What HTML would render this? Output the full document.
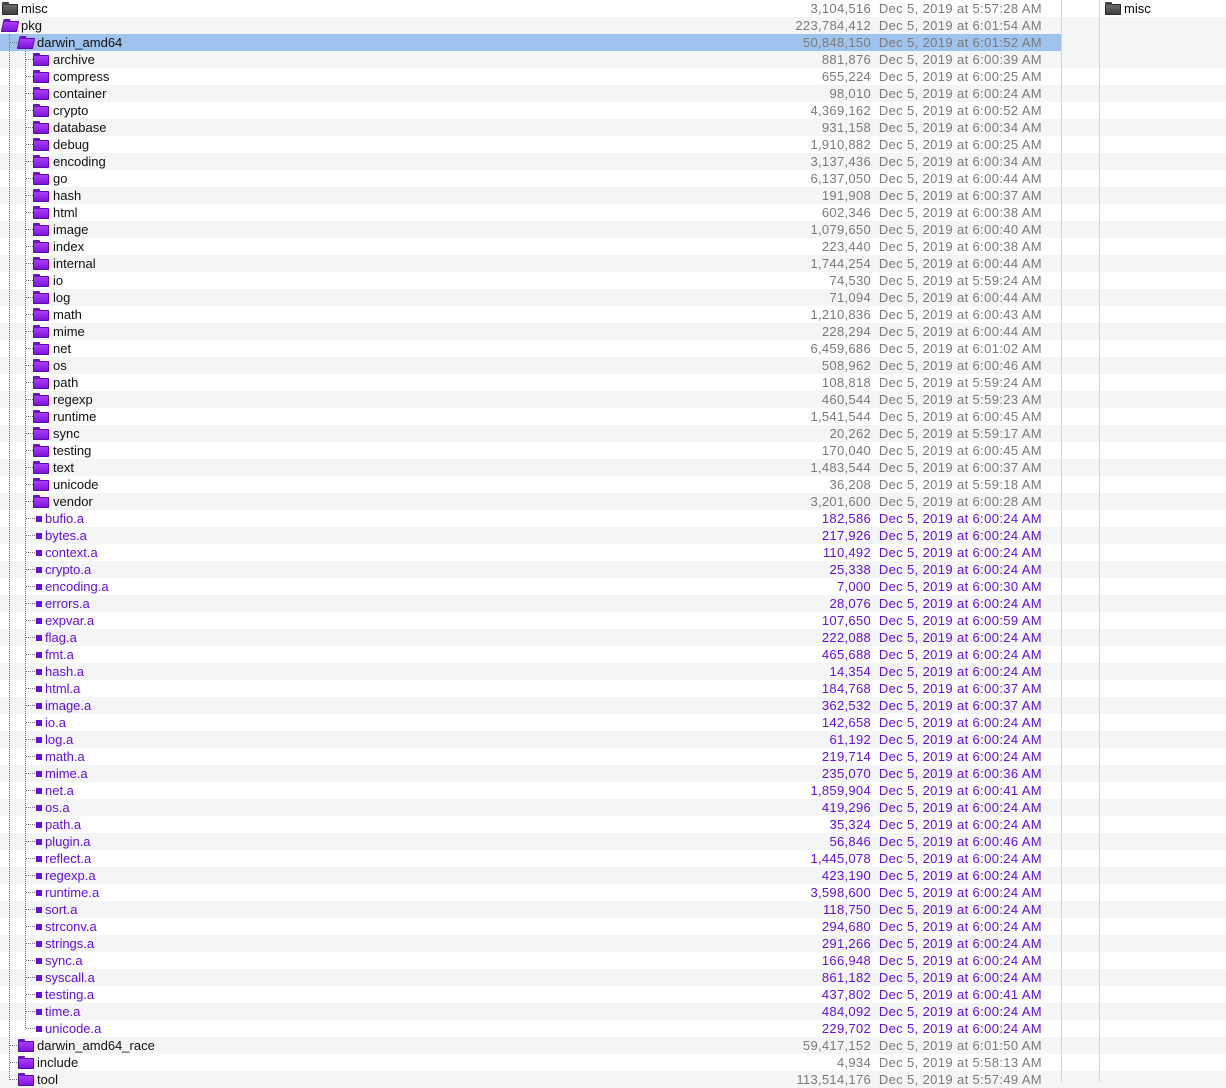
<!DOCTYPE html>
<html><head><meta charset="utf-8"><style>
body{margin:0;width:1226px;height:1082px;overflow:hidden;background:#fff;font-family:"Liberation Sans",Helvetica,sans-serif;font-size:13px;position:relative}
.r{position:relative;height:17px;line-height:17px;color:#111;white-space:nowrap}
.r:nth-child(even){background:#f4f5f5}
.sel{background:linear-gradient(to right,#9fc3ec 0,#9fc3ec 1061px,#f4f5f5 1061px)!important}
.n{position:absolute;top:0}
.s{position:absolute;right:355px;top:0;color:#7a7a7a;letter-spacing:0.3px}
.t{position:absolute;right:184px;top:0;color:#7a7a7a;letter-spacing:0.37px}
.p .n,.p .s,.p .t{color:#6610dc}
.f{position:absolute;top:4px;width:16px;height:11px;background:linear-gradient(#b040ff,#7a10d8);border-radius:1px;box-shadow:inset 0 0 0 1px #5a0aa8}
.f:before{content:"";position:absolute;left:0;top:-2px;width:7px;height:3px;background:#6a14c8;border-radius:1px 1px 0 0}
.g{background:linear-gradient(#707070,#3a3a3a);box-shadow:inset 0 0 0 1px #2a2a2a}.g:before{background:#444}
.o{transform:skewX(-12deg)}
.q{position:absolute;top:6px;width:6px;height:6px;background:#6610dc}
.h{position:absolute;top:8px;height:0;border-top:1px dotted #777}
.v{position:absolute;width:0;border-left:1px dotted #777}
.ln{position:absolute;top:0;width:1px;height:1082px;background:#d6d6d6}
#rows .r::after{content:"";position:absolute;top:8px;height:0;border-top:1px dotted #777}
#rows .r:nth-child(n+4):nth-child(-n+30)::after{left:26px;width:7px}
#rows .r:nth-child(n+31):nth-child(-n+61)::after{left:26px;width:9px}
#rows .r:nth-child(3)::after,#rows .r:nth-child(n+62)::after{left:10px;width:7px}
</style></head><body>
<div id="rows">
<div class="r"><i class="f g" style="left:2px"></i><span class="n" style="left:21px">misc</span><span class="s">3,104,516</span><span class="t">Dec 5, 2019 at 5:57:28 AM</span></div>
<div class="r"><i class="f o" style="left:2px"></i><span class="n" style="left:21px">pkg</span><span class="s">223,784,412</span><span class="t">Dec 5, 2019 at 6:01:54 AM</span></div>
<div class="r sel"><i class="f o" style="left:18px"></i><span class="n" style="left:37px">darwin_amd64</span><span class="s">50,848,150</span><span class="t">Dec 5, 2019 at 6:01:52 AM</span></div>
<div class="r"><i class="f" style="left:33px"></i><span class="n" style="left:53px">archive</span><span class="s">881,876</span><span class="t">Dec 5, 2019 at 6:00:39 AM</span></div>
<div class="r"><i class="f" style="left:33px"></i><span class="n" style="left:53px">compress</span><span class="s">655,224</span><span class="t">Dec 5, 2019 at 6:00:25 AM</span></div>
<div class="r"><i class="f" style="left:33px"></i><span class="n" style="left:53px">container</span><span class="s">98,010</span><span class="t">Dec 5, 2019 at 6:00:24 AM</span></div>
<div class="r"><i class="f" style="left:33px"></i><span class="n" style="left:53px">crypto</span><span class="s">4,369,162</span><span class="t">Dec 5, 2019 at 6:00:52 AM</span></div>
<div class="r"><i class="f" style="left:33px"></i><span class="n" style="left:53px">database</span><span class="s">931,158</span><span class="t">Dec 5, 2019 at 6:00:34 AM</span></div>
<div class="r"><i class="f" style="left:33px"></i><span class="n" style="left:53px">debug</span><span class="s">1,910,882</span><span class="t">Dec 5, 2019 at 6:00:25 AM</span></div>
<div class="r"><i class="f" style="left:33px"></i><span class="n" style="left:53px">encoding</span><span class="s">3,137,436</span><span class="t">Dec 5, 2019 at 6:00:34 AM</span></div>
<div class="r"><i class="f" style="left:33px"></i><span class="n" style="left:53px">go</span><span class="s">6,137,050</span><span class="t">Dec 5, 2019 at 6:00:44 AM</span></div>
<div class="r"><i class="f" style="left:33px"></i><span class="n" style="left:53px">hash</span><span class="s">191,908</span><span class="t">Dec 5, 2019 at 6:00:37 AM</span></div>
<div class="r"><i class="f" style="left:33px"></i><span class="n" style="left:53px">html</span><span class="s">602,346</span><span class="t">Dec 5, 2019 at 6:00:38 AM</span></div>
<div class="r"><i class="f" style="left:33px"></i><span class="n" style="left:53px">image</span><span class="s">1,079,650</span><span class="t">Dec 5, 2019 at 6:00:40 AM</span></div>
<div class="r"><i class="f" style="left:33px"></i><span class="n" style="left:53px">index</span><span class="s">223,440</span><span class="t">Dec 5, 2019 at 6:00:38 AM</span></div>
<div class="r"><i class="f" style="left:33px"></i><span class="n" style="left:53px">internal</span><span class="s">1,744,254</span><span class="t">Dec 5, 2019 at 6:00:44 AM</span></div>
<div class="r"><i class="f" style="left:33px"></i><span class="n" style="left:53px">io</span><span class="s">74,530</span><span class="t">Dec 5, 2019 at 5:59:24 AM</span></div>
<div class="r"><i class="f" style="left:33px"></i><span class="n" style="left:53px">log</span><span class="s">71,094</span><span class="t">Dec 5, 2019 at 6:00:44 AM</span></div>
<div class="r"><i class="f" style="left:33px"></i><span class="n" style="left:53px">math</span><span class="s">1,210,836</span><span class="t">Dec 5, 2019 at 6:00:43 AM</span></div>
<div class="r"><i class="f" style="left:33px"></i><span class="n" style="left:53px">mime</span><span class="s">228,294</span><span class="t">Dec 5, 2019 at 6:00:44 AM</span></div>
<div class="r"><i class="f" style="left:33px"></i><span class="n" style="left:53px">net</span><span class="s">6,459,686</span><span class="t">Dec 5, 2019 at 6:01:02 AM</span></div>
<div class="r"><i class="f" style="left:33px"></i><span class="n" style="left:53px">os</span><span class="s">508,962</span><span class="t">Dec 5, 2019 at 6:00:46 AM</span></div>
<div class="r"><i class="f" style="left:33px"></i><span class="n" style="left:53px">path</span><span class="s">108,818</span><span class="t">Dec 5, 2019 at 5:59:24 AM</span></div>
<div class="r"><i class="f" style="left:33px"></i><span class="n" style="left:53px">regexp</span><span class="s">460,544</span><span class="t">Dec 5, 2019 at 5:59:23 AM</span></div>
<div class="r"><i class="f" style="left:33px"></i><span class="n" style="left:53px">runtime</span><span class="s">1,541,544</span><span class="t">Dec 5, 2019 at 6:00:45 AM</span></div>
<div class="r"><i class="f" style="left:33px"></i><span class="n" style="left:53px">sync</span><span class="s">20,262</span><span class="t">Dec 5, 2019 at 5:59:17 AM</span></div>
<div class="r"><i class="f" style="left:33px"></i><span class="n" style="left:53px">testing</span><span class="s">170,040</span><span class="t">Dec 5, 2019 at 6:00:45 AM</span></div>
<div class="r"><i class="f" style="left:33px"></i><span class="n" style="left:53px">text</span><span class="s">1,483,544</span><span class="t">Dec 5, 2019 at 6:00:37 AM</span></div>
<div class="r"><i class="f" style="left:33px"></i><span class="n" style="left:53px">unicode</span><span class="s">36,208</span><span class="t">Dec 5, 2019 at 5:59:18 AM</span></div>
<div class="r"><i class="f" style="left:33px"></i><span class="n" style="left:53px">vendor</span><span class="s">3,201,600</span><span class="t">Dec 5, 2019 at 6:00:28 AM</span></div>
<div class="r p"><i class="q" style="left:36px"></i><span class="n" style="left:45px">bufio.a</span><span class="s">182,586</span><span class="t">Dec 5, 2019 at 6:00:24 AM</span></div>
<div class="r p"><i class="q" style="left:36px"></i><span class="n" style="left:45px">bytes.a</span><span class="s">217,926</span><span class="t">Dec 5, 2019 at 6:00:24 AM</span></div>
<div class="r p"><i class="q" style="left:36px"></i><span class="n" style="left:45px">context.a</span><span class="s">110,492</span><span class="t">Dec 5, 2019 at 6:00:24 AM</span></div>
<div class="r p"><i class="q" style="left:36px"></i><span class="n" style="left:45px">crypto.a</span><span class="s">25,338</span><span class="t">Dec 5, 2019 at 6:00:24 AM</span></div>
<div class="r p"><i class="q" style="left:36px"></i><span class="n" style="left:45px">encoding.a</span><span class="s">7,000</span><span class="t">Dec 5, 2019 at 6:00:30 AM</span></div>
<div class="r p"><i class="q" style="left:36px"></i><span class="n" style="left:45px">errors.a</span><span class="s">28,076</span><span class="t">Dec 5, 2019 at 6:00:24 AM</span></div>
<div class="r p"><i class="q" style="left:36px"></i><span class="n" style="left:45px">expvar.a</span><span class="s">107,650</span><span class="t">Dec 5, 2019 at 6:00:59 AM</span></div>
<div class="r p"><i class="q" style="left:36px"></i><span class="n" style="left:45px">flag.a</span><span class="s">222,088</span><span class="t">Dec 5, 2019 at 6:00:24 AM</span></div>
<div class="r p"><i class="q" style="left:36px"></i><span class="n" style="left:45px">fmt.a</span><span class="s">465,688</span><span class="t">Dec 5, 2019 at 6:00:24 AM</span></div>
<div class="r p"><i class="q" style="left:36px"></i><span class="n" style="left:45px">hash.a</span><span class="s">14,354</span><span class="t">Dec 5, 2019 at 6:00:24 AM</span></div>
<div class="r p"><i class="q" style="left:36px"></i><span class="n" style="left:45px">html.a</span><span class="s">184,768</span><span class="t">Dec 5, 2019 at 6:00:37 AM</span></div>
<div class="r p"><i class="q" style="left:36px"></i><span class="n" style="left:45px">image.a</span><span class="s">362,532</span><span class="t">Dec 5, 2019 at 6:00:37 AM</span></div>
<div class="r p"><i class="q" style="left:36px"></i><span class="n" style="left:45px">io.a</span><span class="s">142,658</span><span class="t">Dec 5, 2019 at 6:00:24 AM</span></div>
<div class="r p"><i class="q" style="left:36px"></i><span class="n" style="left:45px">log.a</span><span class="s">61,192</span><span class="t">Dec 5, 2019 at 6:00:24 AM</span></div>
<div class="r p"><i class="q" style="left:36px"></i><span class="n" style="left:45px">math.a</span><span class="s">219,714</span><span class="t">Dec 5, 2019 at 6:00:24 AM</span></div>
<div class="r p"><i class="q" style="left:36px"></i><span class="n" style="left:45px">mime.a</span><span class="s">235,070</span><span class="t">Dec 5, 2019 at 6:00:36 AM</span></div>
<div class="r p"><i class="q" style="left:36px"></i><span class="n" style="left:45px">net.a</span><span class="s">1,859,904</span><span class="t">Dec 5, 2019 at 6:00:41 AM</span></div>
<div class="r p"><i class="q" style="left:36px"></i><span class="n" style="left:45px">os.a</span><span class="s">419,296</span><span class="t">Dec 5, 2019 at 6:00:24 AM</span></div>
<div class="r p"><i class="q" style="left:36px"></i><span class="n" style="left:45px">path.a</span><span class="s">35,324</span><span class="t">Dec 5, 2019 at 6:00:24 AM</span></div>
<div class="r p"><i class="q" style="left:36px"></i><span class="n" style="left:45px">plugin.a</span><span class="s">56,846</span><span class="t">Dec 5, 2019 at 6:00:46 AM</span></div>
<div class="r p"><i class="q" style="left:36px"></i><span class="n" style="left:45px">reflect.a</span><span class="s">1,445,078</span><span class="t">Dec 5, 2019 at 6:00:24 AM</span></div>
<div class="r p"><i class="q" style="left:36px"></i><span class="n" style="left:45px">regexp.a</span><span class="s">423,190</span><span class="t">Dec 5, 2019 at 6:00:24 AM</span></div>
<div class="r p"><i class="q" style="left:36px"></i><span class="n" style="left:45px">runtime.a</span><span class="s">3,598,600</span><span class="t">Dec 5, 2019 at 6:00:24 AM</span></div>
<div class="r p"><i class="q" style="left:36px"></i><span class="n" style="left:45px">sort.a</span><span class="s">118,750</span><span class="t">Dec 5, 2019 at 6:00:24 AM</span></div>
<div class="r p"><i class="q" style="left:36px"></i><span class="n" style="left:45px">strconv.a</span><span class="s">294,680</span><span class="t">Dec 5, 2019 at 6:00:24 AM</span></div>
<div class="r p"><i class="q" style="left:36px"></i><span class="n" style="left:45px">strings.a</span><span class="s">291,266</span><span class="t">Dec 5, 2019 at 6:00:24 AM</span></div>
<div class="r p"><i class="q" style="left:36px"></i><span class="n" style="left:45px">sync.a</span><span class="s">166,948</span><span class="t">Dec 5, 2019 at 6:00:24 AM</span></div>
<div class="r p"><i class="q" style="left:36px"></i><span class="n" style="left:45px">syscall.a</span><span class="s">861,182</span><span class="t">Dec 5, 2019 at 6:00:24 AM</span></div>
<div class="r p"><i class="q" style="left:36px"></i><span class="n" style="left:45px">testing.a</span><span class="s">437,802</span><span class="t">Dec 5, 2019 at 6:00:41 AM</span></div>
<div class="r p"><i class="q" style="left:36px"></i><span class="n" style="left:45px">time.a</span><span class="s">484,092</span><span class="t">Dec 5, 2019 at 6:00:24 AM</span></div>
<div class="r p"><i class="q" style="left:36px"></i><span class="n" style="left:45px">unicode.a</span><span class="s">229,702</span><span class="t">Dec 5, 2019 at 6:00:24 AM</span></div>
<div class="r"><i class="f" style="left:18px"></i><span class="n" style="left:37px">darwin_amd64_race</span><span class="s">59,417,152</span><span class="t">Dec 5, 2019 at 6:01:50 AM</span></div>
<div class="r"><i class="f" style="left:18px"></i><span class="n" style="left:37px">include</span><span class="s">4,934</span><span class="t">Dec 5, 2019 at 5:58:13 AM</span></div>
<div class="r"><i class="f" style="left:18px"></i><span class="n" style="left:37px">tool</span><span class="s">113,514,176</span><span class="t">Dec 5, 2019 at 5:57:49 AM</span></div>
</div>
<div class="ln" style="left:1061px"></div>
<div class="ln" style="left:1099px"></div>
<i class="f g" style="left:1105px;top:4px"></i><span style="position:absolute;left:1124px;top:0;line-height:17px">misc</span>
<div class="v" style="left:9px;top:34px;height:1046px"></div>
<div class="v" style="left:25px;top:51px;height:977px"></div>
</body></html>
